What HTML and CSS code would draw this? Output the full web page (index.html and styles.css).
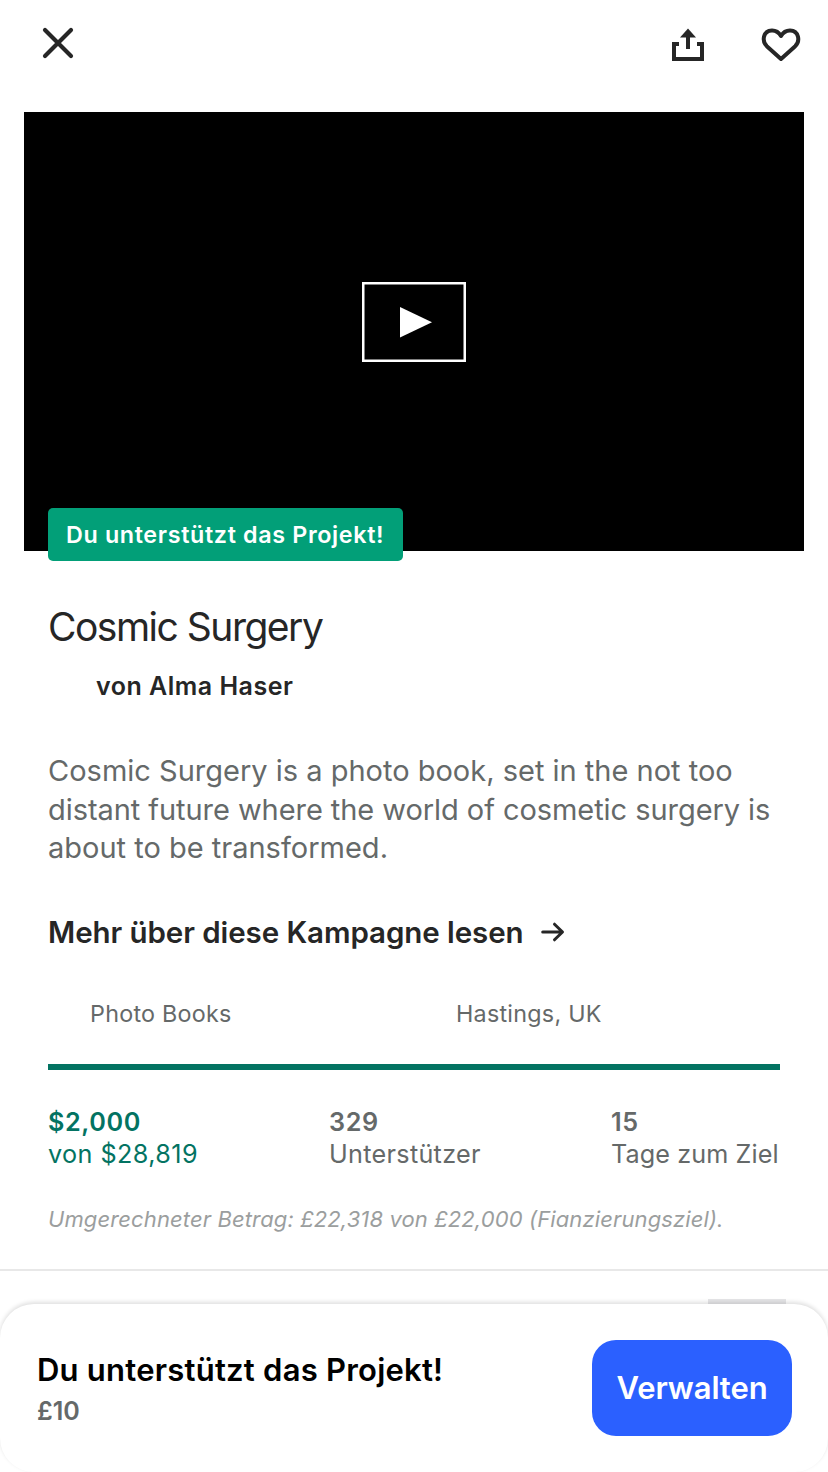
FILE: index.html
```html
<!DOCTYPE html>
<html lang="de">
<head>
<meta charset="utf-8">
<title>Cosmic Surgery</title>
<link rel="stylesheet" href="styles.css">
</head>
<body>
<div class="screen">
  <header class="topbar">
    <svg class="icon-close" viewBox="0 0 32 32"><path d="M3 3 29 29M29 3 3 29"/></svg>
    <div class="actions">
      <svg class="icon-share" viewBox="0 0 34 34"><path class="line" d="M8 16H3V31H31V16H26"/><path class="line" d="M17 21V8"/><path class="solid" d="M17 .5 25 9.500H9Z"/></svg>
      <svg class="icon-heart" viewBox="0 0 40 34"><path d="M20 31 5.800 18.200C.6 13 2 2.800 10.900 2.500 14.900 2.400 17.900 4.500 20 8 22.100 4.500 25.100 2.400 29.100 2.500 38 2.800 39.400 13 34.200 18.200Z"/></svg>
    </div>
  </header>

  <section class="video">
    <div class="play"><svg viewBox="0 0 32 31"><path d="M0 0 32 15.200 0 30.400Z"/></svg></div>
    <div class="badge">Du unterstützt das Projekt!</div>
  </section>

  <main class="content">
    <h1 class="title">Cosmic Surgery</h1>
    <p class="author">von Alma Haser</p>
    <p class="blurb">Cosmic Surgery is a photo book, set in the not too<br><span class="tight">distant future where the world of cosmetic surgery is</span><br>about to be transformed.</p>
    <a class="more"><span>Mehr über diese Kampagne lesen</span><svg viewBox="0 0 24 20"><path d="M1.700 10H21M13.500 2.200 21.500 10 13.500 17.800"/></svg></a>
    <div class="meta"><div>Photo Books</div><div>Hastings, UK</div></div>
    <div class="progress"></div>
    <div class="stats">
      <div class="pledged"><b>$2,000</b><p>von $28,819</p></div>
      <div class="backers"><b>329</b><p>Unterstützer</p></div>
      <div class="days"><b>15</b><p>Tage zum Ziel</p></div>
    </div>
    <p class="converted">Umgerechneter Betrag: £22,318 von £22,000 (Fianzierungsziel).</p>
  </main>
  <div class="next"><div class="thumb"></div></div>

  <footer class="sheet">
    <div>
      <p class="sheet-title">Du unterstützt das Projekt!</p>
      <p class="amount">£10</p>
    </div>
    <button class="manage">Verwalten</button>
  </footer>
</div>
</body>
</html>
```
FILE: styles.css
```css
* { box-sizing: border-box; margin: 0; }

body {
  background: #fff;
  font-family: Inter, "Noto Sans", sans-serif;
  color: #262626;
}

svg { display: block; fill: none; stroke: #262626; }

.screen {
  position: relative;
  width: 828px;
  height: 1472px;
  overflow: hidden;
}

.topbar {
  display: flex;
  justify-content: space-between;
  height: 112px;
  padding: 27px 27px 0 42px;
}
.icon-close { width: 32px; height: 32px; stroke-width: 4.200; stroke-linecap: round; }
.actions { display: flex; gap: 56px; padding-top: 1px; }
.icon-share { width: 34px; height: 34px; }
.icon-share .line { stroke-width: 4; }
.icon-share .solid { fill: #262626; stroke: none; }
.icon-heart { width: 40px; height: 34px; stroke-width: 4; stroke-linejoin: round; }

.video {
  position: relative;
  display: flex;
  justify-content: center;
  height: 439px;
  margin: 0 24px;
  padding-top: 170px;
  background: #000;
}
.play {
  display: flex;
  width: 104px;
  height: 80px;
  padding: 23px 0 0 36px;
  border: 2px solid #fff;
  box-shadow: inset 0 0 0 .5px #fff;
}
.play svg { width: 32px; height: 31px; fill: #fff; stroke: none; }
.badge {
  position: absolute;
  left: 24px;
  top: 396px;
  width: 355px;
  height: 53px;
  padding-left: 18px;
  border-radius: 5px;
  background: #029f78;
  color: #fff;
  font-size: 23.300px;
  font-weight: 600;
  letter-spacing: .65px;
  line-height: 53px;
  white-space: nowrap;
}

.content { padding: 52px 48px 0; white-space: nowrap; }
.title { font-size: 39px; font-weight: 400; letter-spacing: -1.500px; line-height: 48px; }
.author { margin-top: 19px; padding-left: 48px; font-size: 25px; font-weight: 600; letter-spacing: .5px; line-height: 32px; }
.blurb { margin-top: 50px; color: #656969; font-size: 29px; line-height: 38.500px; }
.blurb .tight { letter-spacing: -.06px; }
.more { display: flex; align-items: center; gap: 17px; margin-top: 44px; font-size: 29.500px; font-weight: 600; letter-spacing: -.07px; line-height: 40px; }
.more svg { width: 24px; height: 20px; stroke-width: 3; stroke-linecap: round; stroke-linejoin: round; }
.meta {
  display: grid;
  grid-template-columns: 366px 1fr;
  margin-top: 46px;
  padding-left: 42px;
  color: #656969;
  font-size: 23.300px;
  letter-spacing: .26px;
  line-height: 32px;
}
.progress { height: 6px; margin-top: 34px; background: #037362; }
.stats {
  display: grid;
  grid-template-columns: 281px 282px 1fr;
  margin-top: 36px;
  color: #656969;
  font-size: 25.200px;
  line-height: 32px;
}
.stats b { display: block; font-weight: 600; letter-spacing: .6px; }
.pledged { color: #037362; letter-spacing: .42px; }
.backers { letter-spacing: .3px; }
.days { letter-spacing: .1px; }
.converted { margin-top: 33px; color: #9b9e9e; font-size: 22px; font-style: italic; letter-spacing: .12px; line-height: 32px; }

.next {
  display: flex;
  justify-content: flex-end;
  height: 200px;
  margin-top: 34px;
  padding: 28px 42px 0 0;
  border-top: 2px solid #e8e8e8;
}
.thumb { width: 78px; height: 80px; background: #e6e6e8; }

.sheet {
  position: absolute;
  left: 0;
  bottom: 0;
  display: flex;
  justify-content: space-between;
  width: 828px;
  height: 168px;
  padding: 36px 36px 0;
  border-radius: 34px;
  background: #fff;
  box-shadow: 0 -2px 4px rgba(0, 0, 0, .13);
}
.sheet-title { margin-top: 10px; padding-left: 1px; color: #000; font-size: 31px; font-weight: 600; letter-spacing: .23px; line-height: 40px; }
.amount { margin-top: 5px; padding-left: 1px; color: #656969; font-size: 25px; font-weight: 600; line-height: 32px; }
.manage {
  width: 200px;
  height: 96px;
  border: 0;
  border-radius: 24px;
  background: #2b60ff;
  color: #fff;
  font: 600 31px/40px Inter, sans-serif;
  letter-spacing: -.1px;
}
```
